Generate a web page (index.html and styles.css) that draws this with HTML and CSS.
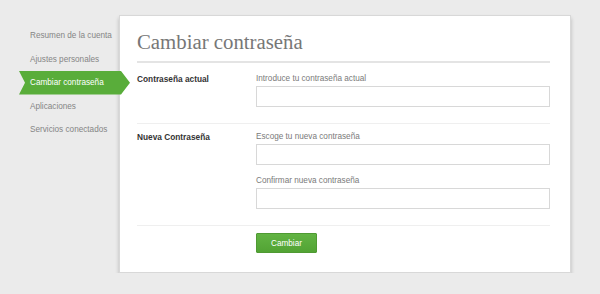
FILE: index.html
```html
<!DOCTYPE html>
<html lang="es">
<head>
  <meta charset="UTF-8" />
  <title>Cambiar contraseña</title>
  <link rel="stylesheet" href="styles.css">
</head>
<body>

  <div class="page">

    <!-- Menu lateral -->
    <ul class="menu">
      <li><a href="#">Resumen de la cuenta</a></li>
      <li><a href="#">Ajustes personales</a></li>
      <li class="activo"><a href="#">Cambiar contraseña</a></li>
      <li><a href="#">Aplicaciones</a></li>
      <li><a href="#">Servicios conectados</a></li>
    </ul>

    <!-- Tarjeta principal -->
    <div class="tarjeta">
      <h1 class="titulo">Cambiar contraseña</h1>

      <div class="fila fila-primera">
        <div class="fila-label">Contraseña actual</div>
        <div class="fila-campos">
          <label class="campo-label">Introduce tu contraseña actual</label>
          <input type="password" class="campo" />
        </div>
      </div>

      <div class="fila">
        <div class="fila-label">Nueva Contraseña</div>
        <div class="fila-campos">
          <label class="campo-label">Escoge tu nueva contraseña</label>
          <input type="password" class="campo" />
          <label class="campo-label campo-label-sep">Confirmar nueva contraseña</label>
          <input type="password" class="campo" />
        </div>
      </div>

      <div class="acciones">
        <button class="boton-verde">Cambiar</button>
      </div>
    </div>

  </div>

</body>
</html>
```

FILE: styles.css
```css
body {
  margin: 0;
  font-family: "Liberation Sans", Arial, sans-serif;
  background: #ebebeb;
}

.page {
  display: flex;
  align-items: flex-start;
}

.menu {
  list-style: none;
  margin: 0;
  padding: 24px 0 0 19px;
  width: 100px;
  flex-shrink: 0;
  position: relative;
  z-index: 2;
}

.menu li {
  height: 23.5px;
}

.menu a {
  display: block;
  height: 23.5px;
  line-height: 23.5px;
  padding-left: 11px;
  font-size: 8.2px;
  color: #858585;
  text-decoration: none;
}

.menu .activo a {
  width: 100px;
  background-color: #59ad3a;
  color: #fff;
  clip-path: polygon(0 0, 102px 0, 111px 50%, 102px 100%, 0 100%, 6px 50%);
}

.tarjeta {
  margin-top: 15px;
  width: 452px;
  box-sizing: border-box;
  background: #fff;
  border: 1px solid #d8d8d8;
  box-shadow: 0 3px 4px rgba(0, 0, 0, 0.22);
  padding: 15px 20px 19px 17px;
}

.titulo {
  margin: 0;
  font-family: "Liberation Serif", "Times New Roman", serif;
  font-weight: normal;
  font-size: 20.8px;
  line-height: 21px;
  color: #777;
  padding-bottom: 9px;
  border-bottom: 2px solid #e4e4e4;
}

.fila {
  display: grid;
  grid-template-columns: 119px 1fr;
  padding: 7px 0 16px;
  border-bottom: 1px solid #efefef;
}

.fila-primera {
  padding-top: 10px;
}

.fila-label {
  font-size: 8.3px;
  font-weight: bold;
  line-height: 12px;
  color: #333;
}

.fila-campos {
  display: flex;
  flex-direction: column;
}

.campo-label {
  font-size: 8.2px;
  line-height: 12px;
  color: #7a7a7a;
  margin-bottom: 1px;
}

.campo-label-sep {
  margin-top: 10px;
}

.campo {
  height: 21px;
  box-sizing: border-box;
  border: 1px solid #d8d8d8;
  background: #fff;
  margin: 0;
}

.acciones {
  padding: 7px 0 0 119px;
}

.boton-verde {
  display: block;
  width: 61px;
  height: 20px;
  padding: 0;
  border: 1px solid #4f9a33;
  border-radius: 1px;
  background: linear-gradient(#62b443, #52a334);
  color: #fff;
  font-family: "Liberation Sans", Arial, sans-serif;
  font-size: 8.2px;
  cursor: pointer;
}
```
